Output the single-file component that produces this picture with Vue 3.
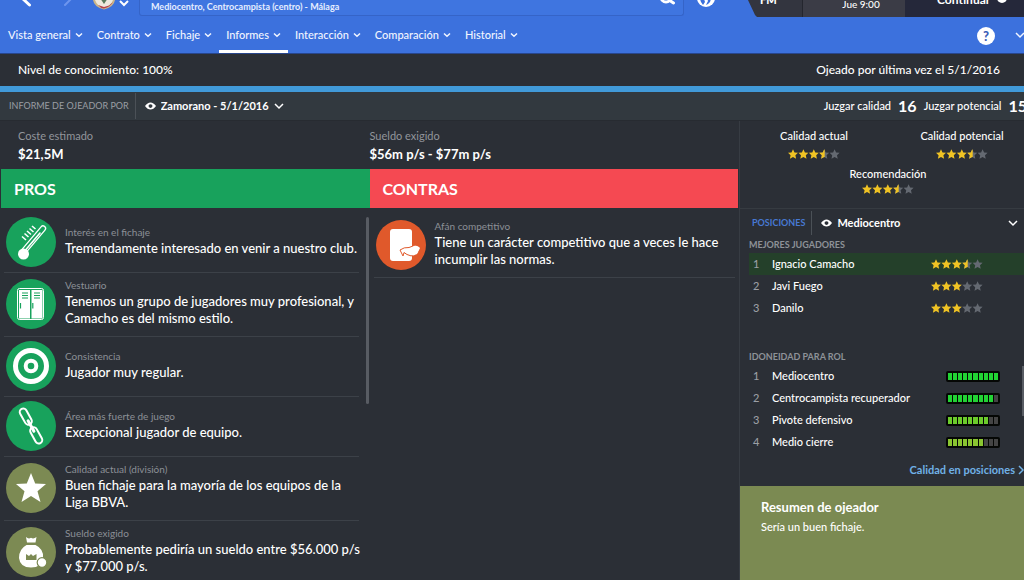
<script setup>
const menu = [
  { label: 'Vista general' },
  { label: 'Contrato' },
  { label: 'Fichaje' },
  { label: 'Informes', active: true },
  { label: 'Interacción' },
  { label: 'Comparación' },
  { label: 'Historial' },
]
const pros = [
  { icon: 'thermo', tone: 'green', label: 'Interés en el fichaje', text: 'Tremendamente interesado en venir a nuestro club.' },
  { icon: 'locker', tone: 'green', label: 'Vestuario', text: 'Tenemos un grupo de jugadores muy profesional, y Camacho es del mismo estilo.' },
  { icon: 'target', tone: 'green', label: 'Consistencia', text: 'Jugador muy regular.' },
  { icon: 'chain', tone: 'green', label: 'Área más fuerte de juego', text: 'Excepcional jugador de equipo.' },
  { icon: 'star', tone: 'olive', label: 'Calidad actual (división)', text: 'Buen fichaje para la mayoría de los equipos de la Liga BBVA.' },
  { icon: 'bag', tone: 'olive', label: 'Sueldo exigido', text: 'Probablemente pediría un sueldo entre $56.000 p/s y $77.000 p/s.' },
]
const cons = [
  { icon: 'card', tone: 'orange', label: 'Afán competitivo', text: 'Tiene un carácter competitivo que a veces le hace incumplir las normas.' },
]
const columns = [
  { id: 'pros', title: 'PROS', items: pros },
  { id: 'cons', title: 'CONTRAS', items: cons },
]
const ratings = [
  { label: 'Calidad actual', value: 3.5 },
  { label: 'Calidad potencial', value: 3.5 },
  { label: 'Recomendación', value: 3.5, wide: true },
]
const players = [
  { name: 'Ignacio Camacho', value: 3.5, current: true },
  { name: 'Javi Fuego', value: 3 },
  { name: 'Danilo', value: 3 },
]
const roles = [
  { name: 'Mediocentro', level: 10, tone: 'high' },
  { name: 'Centrocampista recuperador', level: 9, tone: 'high' },
  { name: 'Pivote defensivo', level: 8, tone: 'mid' },
  { name: 'Medio cierre', level: 7, tone: 'low' },
]
const star = 'M5 0.2 6.5 3.4 10 3.8 7.400 6.200 8.100 9.800 5 8 1.900 9.800 2.600 6.200 0 3.800 3.500 3.400Z'
const halfStar = 'M5.500 1.200V8.300L5 8 1.900 9.800 2.600 6.200 0 3.800 3.500 3.400 5 0.200Z'
</script>

<template>
  <div class="page">
    <header class="header">
      <div class="topbar">
        <button class="nav back" aria-label="Atrás"><svg width="12" height="17" viewBox="0 0 12 17"><path d="M8.500 5 2-1" /></svg></button>
        <button class="nav forward" aria-label="Adelante"><svg width="12" height="17" viewBox="0 0 12 17"><path d="M2 5 8-1" /></svg></button>
        <button class="crest" aria-label="Club">
          <svg width="38" height="17" viewBox="0 0 38 17">
            <path d="M0-8H22V0Q21 7 11 9.500 1 7 0 0Z" fill="#c9b58a" />
            <path d="M2-8H20V0Q18 6 11 8 4 6 2 0Z" fill="#efe9dd" />
            <path d="M5 5Q8 8.500 11 8.500 17 7 20 2L16 5.500 11 7Z" fill="#b8404a" />
            <path d="M7-2H15L11 4Z" fill="#5a7a5b" />
            <path d="M27 1 31 5 35 1" fill="none" stroke="#fff" stroke-width="2" />
          </svg>
        </button>
        <div class="title-box">
          <span>Mediocentro, Centrocampista (centro) - Málaga</span>
          <button class="search" aria-label="Buscar"><svg width="18" height="17" viewBox="0 0 18 17"><circle cx="7" cy="-3" r="5" /><path d="M10 0 14.500 3" /></svg></button>
        </div>
        <button class="world" aria-label="Mundo">
          <svg width="20" height="17" viewBox="0 0 20 17"><circle cx="10" cy="-2" r="9" fill="#fff" /><path d="M4-1 8-1 9 2 7 5 5 2ZM11-2 15-1 14 2 12 4 10 5 12 1Z" fill="#3a6fdd" /></svg>
        </button>
        <div class="status">
          <span class="brand">FM</span>
          <span class="date">Jue 9:00</span>
          <button class="continue">Continuar <i></i></button>
        </div>
      </div>
      <nav class="menu">
        <button v-for="m in menu" :key="m.label" :class="{ active: m.active }">
          {{ m.label }}
          <svg width="8" height="6" viewBox="0 0 8 6"><path d="M1 1.500 4 4.300 7 1.500" /></svg>
        </button>
        <button class="help" aria-label="Ayuda">?</button>
        <button class="more" aria-label="Más"><svg width="10" height="8" viewBox="0 0 10 8"><path d="M1 2 5 6 9 2" /></svg></button>
      </nav>
    </header>

    <div class="knowledge">
      <span>Nivel de conocimiento: 100%</span>
      <span>Ojeado por última vez el 5/1/2016</span>
    </div>

    <div class="scoutbar">
      <label class="caption" for="scout">INFORME DE OJEADOR POR</label>
      <div class="picker">
        <svg class="eye" width="11" height="8" viewBox="0 0 11 8"><path fill-rule="evenodd" d="M0 4Q2.500 0.500 5.500 0.500T11 4Q8.500 7.500 5.500 7.500T0 4ZM5.500 2.300A2 1.800 0 1 0 5.500 5.900 2 1.800 0 1 0 5.500 2.300Z" /></svg>
        <select id="scout"><option>Zamorano - 5/1/2016</option></select>
        <svg class="chev" width="10" height="8" viewBox="0 0 10 8"><path d="M1 2 5 6 9 2" /></svg>
      </div>
      <div class="judging">
        <span>Juzgar calidad</span><b>16</b>
        <span>Juzgar potencial</span><b>15</b>
      </div>
    </div>

    <main class="main">
      <div class="report">
        <div class="costs">
          <div><span>Coste estimado</span><b>$21,5M</b></div>
          <div><span>Sueldo exigido</span><b>$56m p/s - $77m p/s</b></div>
        </div>
        <div class="columns">
          <section v-for="c in columns" :key="c.id" :class="c.id">
            <h2>{{ c.title }}</h2>
            <ul>
              <li v-for="i in c.items" :key="i.label">
                <svg class="badge" :class="i.tone" width="50" height="50" viewBox="0 0 50 50">
                  <circle class="disc" cx="25" cy="25" r="25" />
                  <g v-if="i.icon === 'thermo'">
                    <path d="M18 34 37 11.500" stroke="#fff" stroke-width="6.400" stroke-linecap="round" />
                    <path d="M18 34 37 11.500" class="cut" stroke-width="3.800" stroke-linecap="round" />
                    <path d="M17 36 34 16" stroke="#fff" stroke-width="1.600" stroke-linecap="round" />
                    <circle cx="17.500" cy="37" r="5.500" fill="#fff" />
                    <path d="M16 19.500 20 23M18.500 16.500 22.500 20M21 14 25 17.500M23.500 11.500 27.500 15M26 9 29.500 12" stroke="#fff" stroke-width="1.600" />
                  </g>
                  <g v-else-if="i.icon === 'locker'">
                    <rect x="11.500" y="9.500" width="26" height="31" rx="2" fill="none" stroke="#fff" />
                    <path d="M13 11H24V39.500H13ZM25.500 11H36.500V39.500H25.500Z" fill="#fff" />
                    <path d="M16 14H22M16 16.500H22M16 19H22M28 14H34M28 16.500H34M28 19H34M14.500 24V29.500M26.800 24V29.500" class="cut" stroke-width="1.200" />
                  </g>
                  <g v-else-if="i.icon === 'target'" fill="none" stroke="#fff">
                    <circle cx="25" cy="25" r="15.500" stroke-width="5" />
                    <circle cx="25" cy="25" r="5.300" stroke-width="4" />
                  </g>
                  <g v-else-if="i.icon === 'chain'" fill="none" stroke="#fff">
                    <g transform="rotate(-29 25 25)" stroke-width="2">
                      <rect x="21.500" y="5.500" width="7" height="17.500" rx="3.500" />
                      <rect x="21.500" y="27" width="7" height="17.500" rx="3.500" />
                      <path d="M25 19V31" stroke-width="3" stroke-linecap="round" />
                    </g>
                  </g>
                  <path v-else-if="i.icon === 'star'" fill="#fff" d="M25 10 29.200 20.500 40 21 31.500 28.200 34.500 39 25 33 15.500 39 18.500 28.200 10 21 20.800 20.500Z" />
                  <g v-else-if="i.icon === 'bag'">
                    <path d="M20 10Q22.500 12.500 25 10.800 27.500 12.500 30.500 10L29.500 15.500H21ZM20.500 18H29.500Q38 22 37 31 36 40.500 25 40.500T13 31Q13 22 20.500 18Z" fill="#fff" />
                    <path d="M20 27 23 29 25 27 27 29 30.500 27V33H20Z" class="cut-fill" />
                    <circle cx="36" cy="35.500" r="4.800" fill="#fff" class="cut" stroke-width="1.200" />
                  </g>
                  <g v-else>
                    <rect x="14" y="9" width="22" height="32" rx="3" fill="#fff" />
                    <path d="M24 30Q28 27 33 27.500L37 26Q40 24.500 44 27.500L42 33 39 35Q35 37 31 34.500L28 32.500 27 36Z" fill="#fff" class="cut" stroke-width="1" stroke-linejoin="round" />
                    <path d="M35.500 27.500 38 26Q41 25 44 28L41 34 37 35.500 33 33.500Z" fill="#fff" />
                  </g>
                </svg>
                <div class="copy"><span>{{ i.label }}</span><p>{{ i.text }}</p></div>
              </li>
            </ul>
            <i v-if="c.id === 'pros'" class="scroll"></i>
          </section>
        </div>
      </div>

      <aside class="side">
        <div class="ratings">
          <div v-for="r in ratings" :key="r.label" :class="{ wide: r.wide }">
            <span>{{ r.label }}</span>
            <svg class="stars" width="52" height="10" viewBox="0 0 52 10">
              <g v-for="n in 5" :key="n" :transform="`translate(${(n - 1) * 10.4} 0)`">
                <path :d="star" :class="n <= r.value ? 'on' : 'off'" /><path v-if="n - r.value === 0.5" :d="halfStar" class="on" />
              </g>
            </svg>
          </div>
        </div>
        <div class="positions">
          <label for="position">POSICIONES</label>
          <div class="picker">
            <svg class="eye" width="11" height="8" viewBox="0 0 11 8"><path fill-rule="evenodd" d="M0 4Q2.500 0.500 5.500 0.500T11 4Q8.500 7.500 5.500 7.500T0 4ZM5.500 2.300A2 1.800 0 1 0 5.500 5.900 2 1.800 0 1 0 5.500 2.300Z" /></svg>
            <select id="position"><option>Mediocentro</option></select>
            <svg class="chev" width="10" height="8" viewBox="0 0 10 8"><path d="M1 2 5 6 9 2" /></svg>
          </div>
        </div>
        <h3>MEJORES JUGADORES</h3>
        <ol class="players">
          <li v-for="(p, k) in players" :key="p.name" :class="{ current: p.current }">
            <em>{{ k + 1 }}</em><span>{{ p.name }}</span>
            <svg class="stars" width="52" height="10" viewBox="0 0 52 10">
              <g v-for="n in 5" :key="n" :transform="`translate(${(n - 1) * 10.4} 0)`">
                <path :d="star" :class="n <= p.value ? 'on' : 'off'" /><path v-if="n - p.value === 0.5" :d="halfStar" class="on" />
              </g>
            </svg>
          </li>
        </ol>
        <h3>IDONEIDAD PARA ROL</h3>
        <div class="role-wrap">
          <ol class="roles">
            <li v-for="(r, k) in roles" :key="r.name">
              <em>{{ k + 1 }}</em><span>{{ r.name }}</span>
              <div class="meter" :class="r.tone"><i v-for="n in 10" :key="n" :class="{ on: n <= r.level }"></i></div>
            </li>
          </ol>
          <i class="role-scroll"></i>
        </div>
        <a class="link" href="#">Calidad en posiciones <svg width="6" height="10" viewBox="0 0 6 10"><path d="M1 1 5 5 1 9" /></svg></a>
        <section class="summary">
          <h4>Resumen de ojeador</h4>
          <p>Sería un buen fichaje.</p>
        </section>
      </aside>
    </main>
  </div>
</template>

<style>
body { margin: 0; background: #2b2f36; }
</style>

<style scoped>
* { box-sizing: border-box; }
.page { min-height: 100vh; display: flex; flex-direction: column; overflow: hidden; background: #2b2f36; color: #fff; font: 500 13px/16px Lato, "Noto Sans", sans-serif; }
button { border: 0; padding: 0; background: none; color: inherit; font: inherit; cursor: pointer; }
svg { display: block; flex: none; }
h2, h3, h4, p, ul, ol { margin: 0; padding: 0; list-style: none; }
.header { background: #3c71dd; border-bottom: 1px solid #28468c; }
.topbar { height: 17px; display: flex; align-items: flex-start; overflow: hidden; }
.nav { margin-left: 21px; }
.nav path { fill: none; stroke: #fff; stroke-width: 3; stroke-linecap: round; }
.forward { margin-left: 30px; }
.forward path { stroke: #6d95ee; stroke-width: 2; }
.crest { margin-left: 18px; }
.title-box { flex: 1; height: 16px; margin-left: 8px; padding-left: 11px; display: flex; justify-content: space-between; border: 1px solid #3564c8; border-top: 0; border-radius: 0 0 3px 3px; background: #3f75e0; font-size: 9px; line-height: 13px; font-weight: 700; color: #e6eeff; }
.search { width: 24px; }
.search path, .search circle { fill: none; stroke: #fff; stroke-width: 3; stroke-linecap: round; }
.world { margin: 0 32px 0 12px; }
.status { display: flex; width: 276px; height: 17px; background: #33353f; clip-path: polygon(0 0, 100% 0, 100% 100%, 9px 100%, 7px 15px); }
.brand { width: 55px; padding-left: 12px; border-right: 1px solid #24262e; font-size: 11px; font-weight: 900; line-height: 0; }
.date { width: 102px; text-align: center; background: #3b3c46; padding-left: 14px; font-size: 10px; line-height: 8px; }
.continue { flex: 1; display: flex; gap: 7px; padding-left: 32px; height: 17px; background: #25283a; font-weight: 700; font-size: 12px; line-height: 0; }
.continue i { width: 10px; height: 10px; margin-top: -7px; border-radius: 50%; background: #fff; }
.menu { height: 36px; padding-left: 1px; display: flex; }
.menu button { display: flex; align-items: center; gap: 4px; padding: 0 7px; font-size: 11px; color: #f1f5ff; border: 0 solid transparent; border-width: 3px 0; }
.menu button.active { border-bottom-color: #fff; }
.menu path, .chev path, .link path { fill: none; stroke: currentColor; stroke-width: 1.5; }
.menu .help { width: 18px; height: 18px; padding: 0; border: 0; border-radius: 50%; margin: 10px 0 0 auto; justify-content: center; background: #fff; color: #3c5fb8; font-weight: 900; font-size: 13px; }
.menu .more { padding: 0; margin: 0 0 0 20px; width: 9px; overflow: hidden; }
.knowledge { height: 38px; display: flex; justify-content: space-between; padding: 7px 24px 0 18px; border-bottom: 6px solid #419ad9; font-size: 12px; line-height: 17px; background: #2b2f36; }
.scoutbar { height: 29px; display: flex; align-items: center; background: #32393f; border-bottom: 1px solid #272b31; white-space: nowrap; }
.caption { padding: 0 6px 0 9px; font-size: 9px; font-weight: 400; color: #9a9ea4; }
.picker { display: flex; align-items: center; }
.picker select { appearance: none; border: 0; background: transparent; color: #fff; padding: 0; font: 700 11px/16px Lato, sans-serif; }
.eye { fill: #fff; }
.scoutbar .picker { height: 26px; padding-left: 9px; gap: 5px; border-left: 1px solid #4b5157; }
.judging { margin: 0 -3px 0 auto; display: flex; align-items: center; gap: 7px; font-size: 11px; }
.judging b { font-size: 16px; font-weight: 700; }
.main { flex: 1; display: grid; grid-template-columns: 1fr 285px; }
.report { display: flex; flex-direction: column; }
.costs { display: grid; grid-template-columns: 1fr 1fr; height: 48px; padding-top: 6px; }
.costs div { display: flex; flex-direction: column; line-height: 18px; }
.costs div:first-child { padding-left: 18px; }
.costs span { font-size: 11px; color: #92959b; font-weight: 400; }
.costs b { font-size: 13px; font-weight: 700; }
.columns { flex: 1; display: grid; grid-template-columns: 1fr 1fr; }
.columns section { position: relative; }
h2 { height: 39px; padding-left: 13px; font-weight: 700; font-size: 16px; line-height: 39px; }
.pros h2 { background: #18a25c; margin-left: 1px; }
.cons h2 { background: #f54952; margin-right: 1px; }
.columns ul { padding: 5px 11px 0 4px; }
.columns li { display: flex; align-items: center; gap: 9px; padding: 4px 0 5px 2px; border-bottom: 1px solid #3c4148; }
.pros li:last-child { border-bottom-color: transparent; }
.cons ul { padding: 6px 4px 0; }
.copy { flex: 1; margin-right: -7px; padding-bottom: 4px; line-height: 17px; }
.copy span { display: block; font-size: 10px; line-height: 16px; font-weight: 400; color: #8c9096; }
.badge .disc, .badge .cut-fill { fill: var(--tone); }
.badge .cut { stroke: var(--tone); }
.green { --tone: #18a25c; }
.olive { --tone: #7c8a53; }
.orange { --tone: #e0592b; }
.scroll { position: absolute; top: 48px; right: 1px; width: 3px; height: 187px; background: #585c63; border-radius: 2px; }
.side { display: flex; flex-direction: column; border-left: 1px solid #373c43; }
.ratings { height: 88px; margin-right: -12px; padding: 6px 0 7px; display: grid; grid-template-columns: 1fr 1fr; font-size: 11px; border-bottom: 1px solid #363b41; }
.ratings div { display: flex; flex-direction: column; align-items: center; gap: 5px; line-height: 17px; height: 38px; }
.ratings .wide { grid-column: 1 / 3; gap: 2px; }
.on { fill: #f0c324; }
.off { fill: #646971; }
.positions { height: 28px; display: flex; align-items: center; }
.positions label { padding: 0 6px 0 12px; color: #4779d3; font-size: 9px; font-weight: 700; }
.positions .picker { flex: 1; height: 24px; padding: 0 6px 0 9px; gap: 5px; border-left: 1px solid #4b5157; }
.positions select { flex: 1; }
h3 { margin-left: 9px; font-size: 9px; line-height: 15px; font-weight: 700; color: #8e9298; }
.players, .roles { margin-left: 9px; padding-top: 1px; font-size: 11px; }
.players { padding-bottom: 30px; }
.players li, .roles li { display: flex; align-items: center; height: 22px; padding-left: 4px; }
.players li.current { background: #24402a; }
em { width: 19px; font-style: normal; color: #9b9fa5; }
li > span { flex: 1; }
.players .stars { margin-right: 41px; }
.meter { width: 54px; height: 11px; margin-right: 24px; padding: 2px; display: flex; gap: 1px; background: #050705; border-radius: 2px; }
.meter i { flex: 1; background: #444; }
.high .on { background: #22d334; }
.mid .on { background: #6ccc2b; }
.low .on { background: #8ac631; }
.role-wrap { position: relative; }
.role-scroll { position: absolute; right: 0; top: 2px; width: 2px; height: 50px; background: #585c63; }
.link { margin: 9px 0 8px auto; display: flex; align-items: center; gap: 3px; color: #70b1e6; font-size: 11px; font-weight: 700; text-decoration: none; }
.summary { flex: 1; background: #7b8a52; padding: 11px 21px; font-size: 11px; line-height: 20px; }
h4 { font-size: 13px; line-height: 20px; font-weight: 700; }
</style>
